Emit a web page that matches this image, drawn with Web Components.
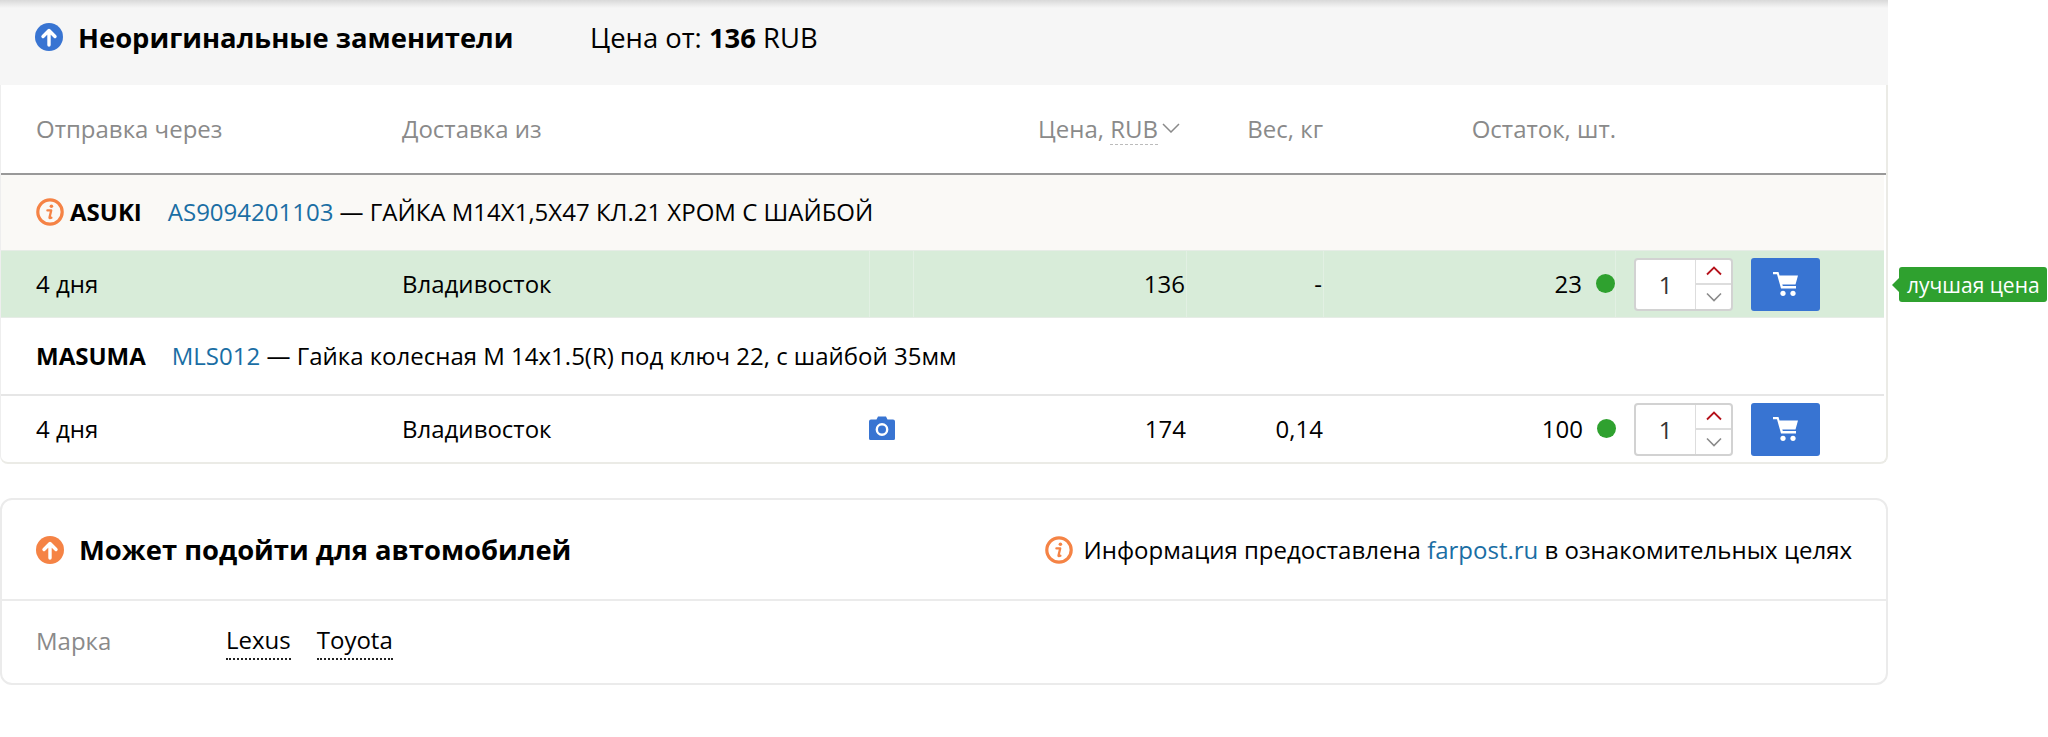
<!DOCTYPE html>
<html lang="ru"><head><meta charset="utf-8"><title>Заменители</title>
<style>
html,body{margin:0;padding:0;background:#fff;font-family:"Open Sans",sans-serif;color:#000;height:737px;overflow:hidden}
</style></head><body>
<parts-page></parts-page>
<script>
const svg={
 up:c=>`<svg width="28" height="28" viewBox="0 0 28 28"><circle cx="14" cy="14" r="14" fill="${c}"/><path d="M14 22V8M8 13.500 14 7.500l6 6" fill="none" stroke="#fff" stroke-width="3.400" stroke-linecap="round" stroke-linejoin="round"/></svg>`,
 info:`<svg width="28" height="28" viewBox="0 0 28 28"><circle cx="14" cy="14" r="12.200" fill="none" stroke="#f58345" stroke-width="3.200"/><circle cx="15.400" cy="8.200" r="1.800" fill="#f58345"/><path d="M11.400 12.400h3.800l-1.700 7.200c-.1.600.5.800 1.900.2" fill="none" stroke="#f58345" stroke-width="2.300" stroke-linecap="round" stroke-linejoin="round"/></svg>`,
 cart:`<svg width="25" height="24" viewBox="0 0 25 24"><path d="M0 0h5.500l1 3.500H25l-2.500 9H9.300l.5 1.600H23v2.300H8L4 2.300H0z" fill="#fff"/><circle cx="10" cy="21.300" r="2.600" fill="#fff"/><circle cx="20" cy="21.300" r="2.600" fill="#fff"/></svg>`,
 cam:`<svg width="26" height="24" viewBox="0 0 26 24"><path d="M2 3.500h5.500L9 .5h8l1.500 3H24a2 2 0 0 1 2 2v17a1.500 1.500 0 0 1-1.500 1.500h-23A1.500 1.500 0 0 1 0 22.500V5.500a2 2 0 0 1 2-2z" fill="#3874d2"/><circle cx="13" cy="13.500" r="5.200" fill="none" stroke="#fff" stroke-width="2.400"/></svg>`
};
const def=(n,css,html)=>customElements.define(n,class extends HTMLElement{
 connectedCallback(){if(this.shadowRoot)return;this.attachShadow({mode:'open'}).innerHTML=`<style>${css}</style>`+(typeof html==='function'?html(this):html)}
});

def('qty-stepper',`
:host{display:flex;box-sizing:border-box;width:99px;height:53px;border:2px solid #d2d2d2;border-radius:4px;background:#fff;font-size:24px;color:#333}
.v{width:60px;display:flex;align-items:center;justify-content:center;border-right:1px solid #ddd;box-sizing:border-box}
.s{flex:1;display:flex;flex-direction:column}
.s div{flex:1;display:flex;align-items:center;justify-content:center}
.s div+div{border-top:2px solid #ddd}
`,`<div class="v">1</div><div class="s"><div><svg width="16" height="10" viewBox="0 0 16 10"><path d="M1 8.500 8 1.500l7 7" fill="none" stroke="#b5121b" stroke-width="1.800"/></svg></div><div><svg width="16" height="10" viewBox="0 0 16 10"><path d="M1 1.500 8 8.500l7-7" fill="none" stroke="#8a8a8a" stroke-width="1.600"/></svg></div></div>`);

def('cart-button',`
:host{display:flex;align-items:center;justify-content:center;width:69px;height:53px;background:#3874d2;border-radius:3px}
`,`${svg.cart}`);

def('best-tag',`
:host{position:absolute;left:1898px;top:16px;height:35px;box-sizing:border-box;background:#2fa12f;color:#fff;border-radius:3px;font-size:21px;padding:0 7px 0 8px;display:flex;align-items:center;white-space:nowrap}
:host::before{content:"";position:absolute;left:-7px;top:11px;border:7px solid transparent;border-left:0;border-right-color:#2fa12f}
`,`<slot></slot>`);

def('section-head',`
:host{display:flex;align-items:center;height:85px;background:#f6f6f6;padding-left:35px;box-sizing:border-box;width:1888px;padding-bottom:10px}
.i{display:flex;margin-right:15px;margin-top:-1px}
b{font-size:27.400px;font-weight:700;width:512px;flex:none}
.t{font-size:27.400px}
.t b{width:auto}
`,`<span class="i">${svg.up('#3874d2')}</span><b>Неоригинальные заменители</b><span class="t">Цена от: <b>136</b> RUB</span>`);

const cols='grid-template-columns:401px 468px 44px 273px 137px 292px 268px;';
def('table-head',`
:host{display:grid;${cols}height:90px;box-sizing:border-box;border-bottom:2px solid #999;align-items:center;color:#8a8a8a;font-size:24px;padding-bottom:2px}
span{display:block}
.a{padding-left:35px}
.r{text-align:right;padding-right:1px}
.st{padding-right:0}
u{text-decoration:none;border-bottom:1px dashed #bbb;display:inline-block;line-height:31px}
.p{display:flex;align-items:center;justify-content:flex-end;gap:4px;margin-right:7px}
`,`<span class="a">Отправка через</span><span>Доставка из</span><span></span>
<span class="p"><span>Цена, <u>RUB</u></span><svg width="18" height="10" viewBox="0 0 18 10"><path d="M1 1l8 8 8-8" fill="none" stroke="#8a8a8a" stroke-width="1.500"/></svg></span>
<span class="r">Вес, кг</span><span class="r st">Остаток, шт.</span><span></span>`);

def('brand-row',`
:host{display:flex;align-items:center;box-sizing:border-box;height:76px;padding:0 0 2px 35px;font-size:24px;white-space:nowrap;width:1883px}
:host([tinted]){background:#faf9f6;height:75px}
b{font-weight:700;margin-right:26px}
a{color:#1a6ea4;text-decoration:none}
.ic{display:flex;margin-right:6px}
`,el=>`${el.hasAttribute('tinted')?`<span class="ic">${svg.info}</span>`:''}<b>${el.getAttribute('brand')}</b><a>${el.getAttribute('code')}</a>&nbsp;— ${el.getAttribute('desc')}`);

def('offer-row',`
:host{display:grid;${cols}position:relative;height:68px;align-items:center;font-size:24px;box-sizing:border-box}
:host([best]){background:#d8ecd9;border-top:1px solid #e6ece6;border-bottom:1px solid #e6ece6;width:1883px}
:host([bordered]){border-top:2px solid #e6e6e6}
.c{height:100%;display:flex;align-items:center;box-sizing:border-box;padding-bottom:2px}
:host([best]) .c{border-right:1px solid #e2f0e3}
.a{padding-left:35px}
.r{justify-content:flex-end;padding-right:1px}
.ph{margin-left:-1px}
.st{justify-content:flex-end;gap:14px}
i{width:19px;height:19px;border-radius:50%;background:#2fa12f;flex:none}
.act{display:flex;align-items:center;padding-left:18px;gap:18px;height:100%}
`,el=>`<div class="c a" style="border:0">${el.getAttribute('days')}</div><div class="c">${el.getAttribute('from')}</div>
<div class="c ph">${el.hasAttribute('photo')?svg.cam:''}</div><div class="c r">${el.getAttribute('price')}</div><div class="c r">${el.getAttribute('weight')}</div>
<div class="c st"><span>${el.getAttribute('stock')}</span><i></i></div>
<div class="act"><qty-stepper></qty-stepper><cart-button></cart-button></div><slot></slot>`);

def('offers-panel',`
:host{display:block;width:1888px;height:379px;box-sizing:border-box;border:solid #ebebe6;border-width:0 2px 2px 1px;border-left-color:#eee;border-radius:0 0 8px 8px;background:#fff}
`,`<slot></slot>`);

def('fit-card',`
:host{display:block;box-sizing:border-box;width:1888px;height:187px;margin-top:34px;border:2px solid #ebebeb;border-radius:12px;background:#fff}
.h{display:flex;align-items:center;height:99px;border-bottom:2px solid #ebebeb;padding:0 34px;font-size:24px}
.h>span:first-child{display:flex;margin-right:15px}
b{font-size:27.400px;font-weight:700;flex:1}
.n{display:flex;align-items:center;gap:11px}
a{color:#1a6ea4;text-decoration:none}
.b{display:flex;align-items:center;height:82px;box-sizing:border-box;padding:0 0 3px 34px;font-size:24px}
.m{color:#8a8a8a;width:190px}
.l{margin-right:26px;border-bottom:2px dotted #222;line-height:36px}
`,`<div class="h"><span>${svg.up('#f58345')}</span><b>Может подойти для автомобилей</b><span class="n">${svg.info}<span>Информация предоставлена <a>farpost.ru</a> в ознакомительных целях</span></span></div>
<div class="b"><span class="m">Марка</span><span class="l">Lexus</span><span class="l">Toyota</span></div>`);

def('parts-page',`
:host{display:block;position:relative;height:737px}
.sh{position:absolute;left:0;top:0;height:8px;width:1888px;background:linear-gradient(#d9d9d9,rgba(245,245,245,0))}
`,`<section-head></section-head><div class="sh"></div>
<offers-panel><table-head></table-head>
<brand-row tinted brand="ASUKI" code="AS9094201103" desc="ГАЙКА М14Х1,5Х47 КЛ.21 ХРОМ С ШАЙБОЙ"></brand-row>
<offer-row best days="4 дня" from="Владивосток" price="136" weight="-" stock="23"><best-tag>лучшая цена</best-tag></offer-row>
<brand-row brand="MASUMA" code="MLS012" desc="Гайка колесная М 14х1.5(R) под ключ 22, с шайбой 35мм"></brand-row>
<offer-row bordered days="4 дня" from="Владивосток" photo price="174" weight="0,14" stock="100" style="width:1883px"></offer-row>
</offers-panel><fit-card></fit-card>`);
</script></body></html>
